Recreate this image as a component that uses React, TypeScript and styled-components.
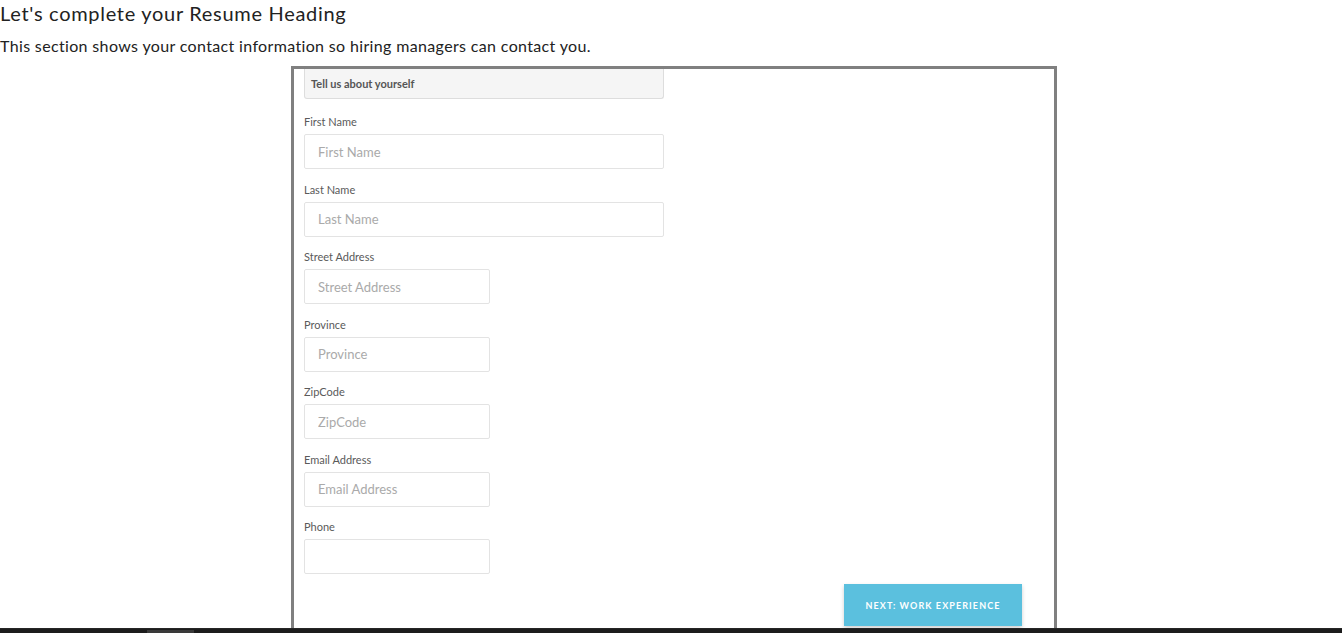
import React from 'react'
import styled, { createGlobalStyle } from 'styled-components'

const GlobalStyle = createGlobalStyle`
  html, body {
    margin: 0;
    padding: 0;
    background: #fff;
    font-family: Lato, 'Open Sans', sans-serif;
    color: #333;
    overflow: hidden;
  }
`

const Page = styled.div`
  height: 633px;
  overflow: hidden;
`

const Title = styled.h1`
  margin: 0;
  font-size: 20px;
  font-weight: 400;
  line-height: 26px;
  letter-spacing: 0.7px;
  color: #222;
`

const Lead = styled.p`
  margin: 9px 0 0;
  font-size: 16px;
  line-height: 22px;
  letter-spacing: 0.35px;
  color: #222;
`

const FormBox = styled.form`
  width: 766px;
  margin: 9px 0 0 291px;
  border: 3px solid #808080;
  border-bottom: none;
  padding: 0 0 40px 10px;
  height: 600px;
  box-sizing: border-box;
`

const Column = styled.div`
  width: 360px;
`

const PanelHeading = styled.div`
  height: 30px;
  box-sizing: border-box;
  background: #f5f5f5;
  border: 1px solid #ddd;
  border-top: none;
  border-radius: 0 0 3px 3px;
  padding: 0 6px;
  display: flex;
  align-items: center;
  font-size: 11px;
  font-weight: 700;
  color: #555;
`

const Field = styled.div<{ $first?: boolean }>`
  margin-top: ${(p) => (p.$first ? '15px' : '12.5px')};
`

const Label = styled.label`
  display: block;
  font-size: 11px;
  line-height: 16px;
  color: #5a5a5a;
  margin-bottom: 4px;
`

const Input = styled.input<{ $short?: boolean }>`
  display: block;
  box-sizing: border-box;
  width: ${(p) => (p.$short ? '186px' : '360px')};
  height: 35px;
  border: 1px solid #e3e3e3;
  border-radius: 2px;
  padding: 0 13px;
  font-family: inherit;
  font-size: 13px;
  color: #555;
  outline: none;
  &::placeholder {
    color: #aaa;
  }
`

const Actions = styled.div`
  display: flex;
  justify-content: flex-end;
  padding-right: 32px;
  margin-top: 10px;
`

const NextButton = styled.button`
  width: 178px;
  height: 42px;
  border: none;
  background: #5bc0de;
  color: #fff;
  font-family: inherit;
  font-size: 9px;
  font-weight: 700;
  letter-spacing: 1.1px;
  text-transform: uppercase;
  box-shadow: 0 2px 4px rgba(0, 0, 0, 0.2);
  cursor: pointer;
`

const BottomBar = styled.div`
  position: fixed;
  left: 0;
  right: 0;
  bottom: 0;
  height: 4px;
  background: #1c1c1c;
  border-top: 1px solid #262626;
`

const BarThumb = styled.div`
  margin-left: 147px;
  margin-top: 1px;
  width: 47px;
  height: 3px;
  background: #3a3a3a;
`

const fields = [
  { name: 'First Name', short: false },
  { name: 'Last Name', short: false },
  { name: 'Street Address', short: true },
  { name: 'Province', short: true },
  { name: 'ZipCode', short: true },
  { name: 'Email Address', short: true },
  { name: 'Phone', short: true, noPlaceholder: true }
]

const App = () => {
  return (
    <Page>
      <GlobalStyle />
      <Title>Let's complete your Resume Heading</Title>
      <Lead>This section shows your contact information so hiring managers can contact you.</Lead>
      <FormBox onSubmit={(e) => e.preventDefault()}>
        <Column>
          <PanelHeading>Tell us about yourself</PanelHeading>
          {fields.map((f, i) => (
            <Field key={f.name} $first={i === 0}>
              <Label>{f.name}</Label>
              <Input $short={f.short} placeholder={f.noPlaceholder ? '' : f.name} />
            </Field>
          ))}
        </Column>
        <Actions>
          <NextButton type="submit">Next: Work Experience</NextButton>
        </Actions>
      </FormBox>
      <BottomBar>
        <BarThumb />
      </BottomBar>
    </Page>
  )
}

export default App
